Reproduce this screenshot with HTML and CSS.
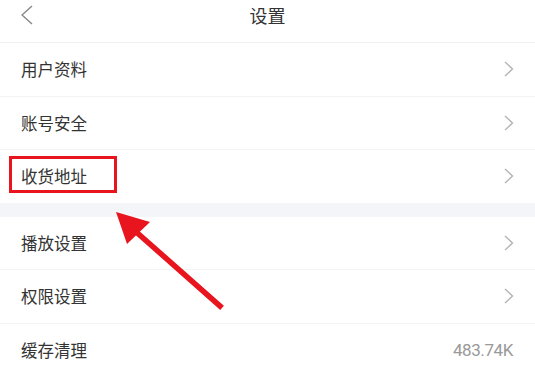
FILE: index.html
```html
<!DOCTYPE html>
<html lang="zh-CN">
<head>
  <meta charset="UTF-8" />
  <meta name="viewport" content="width=device-width, initial-scale=1.0" />
  <title>设置</title>
  <link rel="stylesheet" href="styles.css">
</head>
<body>
  <div class="page">
    <div class="header">
      <div class="back">
        <svg width="12" height="20" viewBox="0 0 12 20"><polyline points="11,1 1,10 11,19" fill="none" stroke="#8a8a8a" stroke-width="1.5"/></svg>
      </div>
      <div class="title">设置</div>
      <div></div>
    </div>

    <div class="group">
      <div class="row"><span>用户资料</span><svg class="chev" width="10" height="16" viewBox="0 0 10 16"><polyline points="1,1 8.5,8 1,15" fill="none" stroke="#b3b3b3" stroke-width="1.4"/></svg></div>
      <div class="row"><span>账号安全</span><svg class="chev" width="10" height="16" viewBox="0 0 10 16"><polyline points="1,1 8.5,8 1,15" fill="none" stroke="#b3b3b3" stroke-width="1.4"/></svg></div>
      <div class="row last">
        <span>收货地址</span><svg class="chev" width="10" height="16" viewBox="0 0 10 16"><polyline points="1,1 8.5,8 1,15" fill="none" stroke="#b3b3b3" stroke-width="1.4"/></svg>
        <div class="highlight"></div>
      </div>
    </div>

    <div class="gap"></div>

    <div class="group">
      <div class="row"><span>播放设置</span><svg class="chev" width="10" height="16" viewBox="0 0 10 16"><polyline points="1,1 8.5,8 1,15" fill="none" stroke="#b3b3b3" stroke-width="1.4"/></svg></div>
      <div class="row"><span>权限设置</span><svg class="chev" width="10" height="16" viewBox="0 0 10 16"><polyline points="1,1 8.5,8 1,15" fill="none" stroke="#b3b3b3" stroke-width="1.4"/></svg></div>
      <div class="row last"><span>缓存清理</span><span class="size">483.74K</span></div>
    </div>

    <!-- annotation arrow pointing at the box -->
    <svg class="arrow" width="535" height="375" viewBox="0 0 535 375">
      <line x1="134" y1="230" x2="220" y2="306" stroke="#e8141e" stroke-width="5.5" stroke-linecap="square"/>
      <polygon points="116,212 150,222 127,244" fill="#e8141e"/>
    </svg>
  </div>
</body>
</html>
```

FILE: styles.css
```css
body {
  margin: 0;
  background: #fff;
  font-family: "Noto Sans CJK SC", "Noto Sans", sans-serif;
  color: #333;
}
.page {
  position: relative;
  width: 535px;
  height: 375px;
  overflow: hidden;
}
.header {
  display: grid;
  grid-template-columns: 1fr auto 1fr;
  align-items: center;
  height: 30px;
  padding-bottom: 12px;
  border-bottom: 1px solid #f1f1f1;
}
.back {
  padding-left: 21px;
  display: flex;
  align-items: center;
}
.title {
  font-size: 18px;
  color: #333;
  line-height: 30px;
}
.row {
  position: relative;
  display: flex;
  justify-content: space-between;
  align-items: center;
  height: 52.5px;
  padding: 0 21px 0 21px;
  border-bottom: 1px solid #f3f3f3;
  font-size: 16.5px;
}
.row.last {
  border-bottom: none;
}
.chev {
  margin-right: 0;
}
.size {
  font-family: Roboto, "Liberation Sans", sans-serif;
  font-size: 17px;
  letter-spacing: -0.4px;
  color: #999;
  margin-right: 1px;
}
.gap {
  height: 14px;
  background: #f4f5f9;
}
.highlight {
  position: absolute;
  left: 9px;
  top: 6px;
  width: 108px;
  height: 37px;
  box-sizing: border-box;
  border: 3px solid #e8141e;
}
.arrow {
  position: absolute;
  left: 0;
  top: 0;
  pointer-events: none;
}
```
